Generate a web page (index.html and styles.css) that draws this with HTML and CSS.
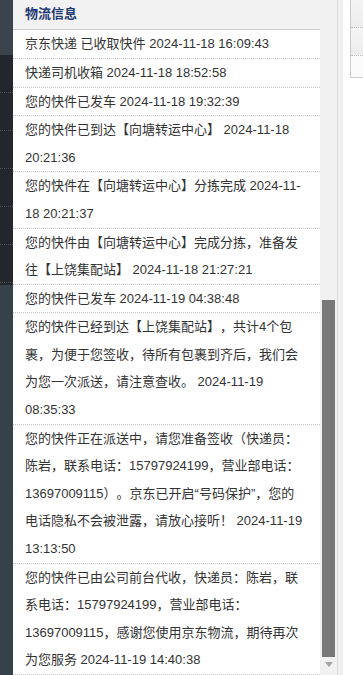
FILE: index.html
```html
<!DOCTYPE html>
<html lang="zh-CN">
<head>
<meta charset="UTF-8" />
<meta name="viewport" content="width=device-width, initial-scale=1" />
<title>物流信息</title>
<link rel="stylesheet" href="styles.css">
</head>
<body>

<div class="page">
  <!-- dark side menu, mostly hidden behind the panel -->
  <div class="sidebar">
    <div class="side-top"></div>
    <div class="side-menu">
      <div class="side-item"></div>
      <div class="side-item"></div>
      <div class="side-item"></div>
      <div class="side-item"></div>
      <div class="side-item"></div>
      <div class="side-item"></div>
    </div>
    <div class="side-bottom"></div>
  </div>

  <div class="panel">
    <div class="panel-head">物流信息</div>
    <ul class="track-list">
      <li>京东快递 已收取快件 2024-11-18 16:09:43</li>
      <li>快递司机收箱 2024-11-18 18:52:58</li>
      <li>您的快件已发车 2024-11-18 19:32:39</li>
      <li>您的快件已到达【向塘转运中心】 2024-11-18 20:21:36</li>
      <li>您的快件在【向塘转运中心】分拣完成 2024-11-18 20:21:37</li>
      <li>您的快件由【向塘转运中心】完成分拣，准备发往【上饶集配站】 2024-11-18 21:27:21</li>
      <li>您的快件已发车 2024-11-19 04:38:48</li>
      <li>您的快件已经到达【上饶集配站】，共计4个包裹，为便于您签收，待所有包裹到齐后，我们会为您一次派送，请注意查收。 2024-11-19 08:35:33</li>
      <li>您的快件正在派送中，请您准备签收（快递员：陈岩，联系电话：15797924199，营业部电话：13697009115）。京东已开启“号码保护”，您的电话隐私不会被泄露，请放心接听！ 2024-11-19 13:13:50</li>
      <li>您的快件已由公司前台代收，快递员：陈岩，联系电话：15797924199，营业部电话：13697009115，感谢您使用京东物流，期待再次为您服务 2024-11-19 14:40:38</li>
    </ul>
  </div>

  <div class="scrollbar">
    <div class="thumb"></div>
    <div class="arrow-down"></div>
  </div>

  <div class="gutter"></div>

  <div class="aside">
    <div class="aside-box">
      <div class="aside-row"></div>
      <div class="aside-row"></div>
      <div class="aside-row"></div>
    </div>
  </div>
</div>

</body>
</html>
```

FILE: styles.css
```css
body {
  margin: 0;
  background: #fff;
  font-family: "Liberation Sans", "Noto Sans CJK SC", sans-serif;
  font-size: 13px;
  color: #333;
  text-spacing-trim: space-all;
}

.page {
  display: flex;
  height: 675px;
  overflow: hidden;
}

/* Side menu strip */
.sidebar {
  width: 13px;
  flex-shrink: 0;
  display: flex;
  flex-direction: column;
}

.side-top {
  height: 55px;
  background: #3b444d;
}

.side-menu {
  background: #23272c;
  padding-bottom: 2px;
}

.side-item {
  height: 37px;
  border-bottom: 1px dotted #4d5258;
}

.side-bottom {
  flex: 1;
  background: #36414b;
}

/* Logistics panel */
.panel {
  width: 307px;
  flex-shrink: 0;
  background: #fff;
  display: flex;
  flex-direction: column;
}

.panel-head {
  height: 30px;
  line-height: 28px;
  padding: 0 12px;
  background: #f2f2f2;
  border-bottom: 1px solid #cfcfcf;
  color: #1f3a70;
  font-weight: bold;
}

.track-list {
  list-style: none;
  margin: 0;
  padding: 0;
}

.track-list li {
  padding: 0 13px 0 12px;
  line-height: 27.6px;
  border-bottom: 1px dotted #c4c4c4;
}

/* Fake scrollbar */
.scrollbar {
  width: 17px;
  flex-shrink: 0;
  background: #f1f1f1;
  display: flex;
  flex-direction: column;
  align-items: center;
}

.thumb {
  width: 13px;
  height: 357px;
  margin-top: 300px;
  background: #787878;
}

.arrow-down {
  margin-top: 5px;
  width: 0;
  height: 0;
  border-left: 4px solid transparent;
  border-right: 4px solid transparent;
  border-top: 5px solid #a3a3a3;
}

.gutter {
  width: 5px;
  flex-shrink: 0;
  background: #f0f0f0;
  border-left: 1px solid #dcdcdc;
}

/* Right column */
.aside {
  flex: 1;
  padding-left: 7px;
  background: #fff;
}

.aside-box {
  height: 77px;
  border-left: 1px solid #cccccc;
  border-bottom: 1px solid #cccccc;
}

.aside-row {
  height: 27px;
  background: linear-gradient(#f4f4f4, #ededed);
  border-bottom: 1px dotted #bdbdbd;
}

.aside-row:last-child {
  height: 21px;
  border-bottom: none;
  background: #fafafa;
}
```
